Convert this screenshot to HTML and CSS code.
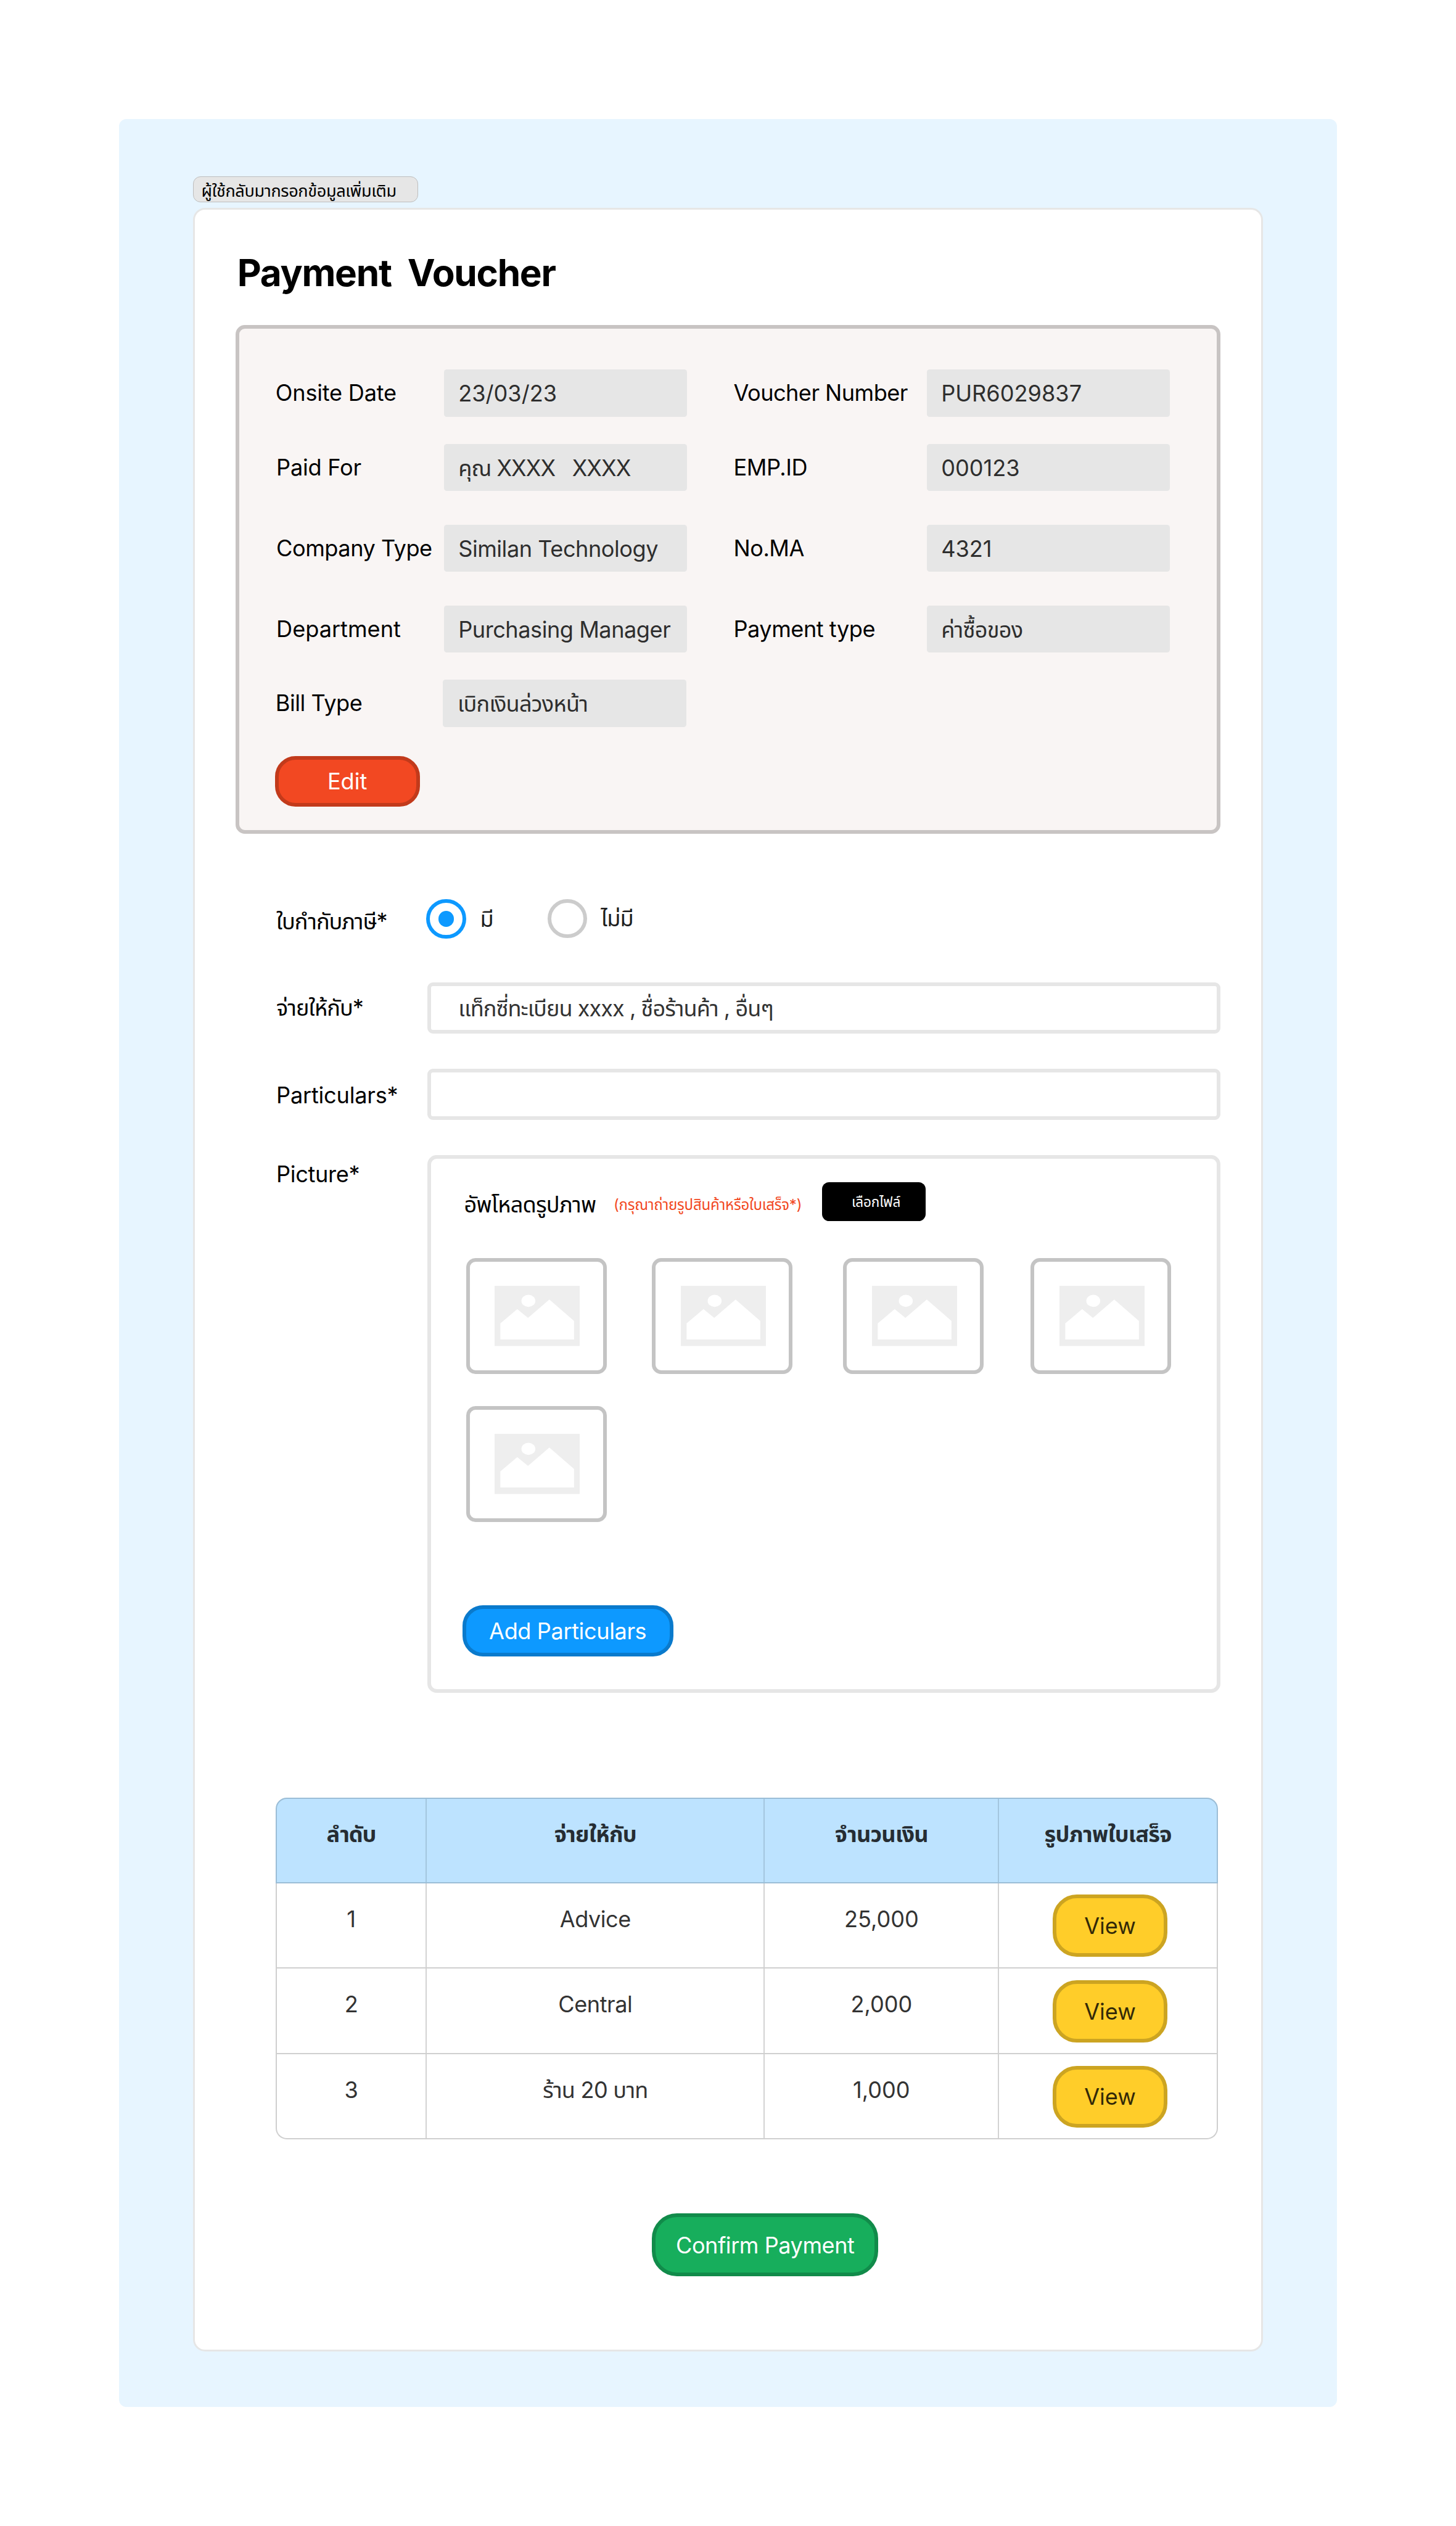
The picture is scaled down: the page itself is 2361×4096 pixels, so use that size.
FILE: index.html
```
<!DOCTYPE html>
<html lang="th">
<head>
<meta charset="utf-8">
<title>Payment Voucher</title>
<link rel="stylesheet" href="styles.css">
</head>
<body>
<svg width="0" height="0" class="defs" aria-hidden="true">
  <symbol id="image" viewBox="0 0 45.9 32.5">
    <path fill="#eeeeee" fill-rule="evenodd" d="M0 0H45.9V32.5H0ZM3.1 20.3V28.9H42.8V18.9L29.5 7.4 18 17.3 12.2 12.5ZM14.45 8.1A3.75 3.25 0 1 0 21.95 8.1A3.75 3.25 0 1 0 14.45 8.1Z"/>
  </symbol>
</svg>
<main class="canvas">
  <div class="tag">ผู้ใช้กลับมากรอกข้อมูลเพิ่มเติม</div>
  <section class="card">
    <h1 class="title">Payment&nbsp; Voucher</h1>

    <section class="panel">
      <div class="details">
        <span class="label nudge tight-xs">Onsite Date</span><span class="value tight-0">23/03/23</span>
        <span class="label second tight-m">Voucher Number</span><span class="value tight-0">PUR6029837</span>

        <span class="label tight-xs">Paid For</span><span class="value tight-xl">คุณ XXXX&nbsp;&nbsp; XXXX</span>
        <span class="label second">EMP.ID</span><span class="value tight-0">000123</span>

        <span class="label">Company Type</span><span class="value">Similan Technology</span>
        <span class="label second">No.MA</span><span class="value tight-0">4321</span>

        <span class="label tight-0">Department</span><span class="value">Purchasing Manager</span>
        <span class="label second">Payment type</span><span class="value tight-l">ค่าซื้อของ</span>

        <span class="label nudge">Bill Type</span><span class="value nudge tight-l">เบิกเงินล่วงหน้า</span>
      </div>
      <button class="btn btn-edit">Edit</button>
    </section>

    <form class="form">
      <span class="label label-tax tight-xxl">ใบกำกับภาษี*</span>
      <div class="radios">
        <span class="radio on"></span><span class="choice first">มี</span>
        <span class="radio"></span><span class="choice">ไม่มี</span>
      </div>

      <span class="label label-pay tight-xl">จ่ายให้กับ*</span>
      <div class="input tight-xl">แท็กซี่ทะเบียน xxxx , ชื่อร้านค้า , อื่นๆ</div>

      <span class="label label-part tight-xs">Particulars*</span>
      <div class="input"></div>

      <span class="label label-pic tight-s">Picture*</span>
      <div class="upload">
        <div class="upload-head">
          <span class="upload-title tight-l">อัพโหลดรูปภาพ</span>
          <span class="upload-note">(กรุณาถ่ายรูปสินค้าหรือใบเสร็จ*)</span>
          <span class="file-btn">เลือกไฟล์</span>
        </div>
        <div class="thumbs">
          <div class="thumb"><svg><use href="#image"/></svg></div>
          <div class="thumb"><svg><use href="#image"/></svg></div>
          <div class="thumb"><svg><use href="#image"/></svg></div>
          <div class="thumb"><svg><use href="#image"/></svg></div>
          <div class="thumb"><svg><use href="#image"/></svg></div>
        </div>
        <button type="button" class="btn btn-add">Add Particulars</button>
      </div>
    </form>

    <div class="table">
      <div class="row head"><span class="tight-xxl">ลำดับ</span><span class="tight-l">จ่ายให้กับ</span><span class="tight-l">จำนวนเงิน</span><span class="tight-l">รูปภาพใบเสร็จ</span></div>
      <div class="row"><span>1</span><span>Advice</span><span class="tight-0">25,000</span><span class="action"><button class="btn btn-view">View</button></span></div>
      <div class="row"><span>2</span><span>Central</span><span class="tight-0">2,000</span><span class="action"><button class="btn btn-view">View</button></span></div>
      <div class="row"><span>3</span><span class="tight-l">ร้าน 20 บาท</span><span class="tight-0">1,000</span><span class="action"><button class="btn btn-view">View</button></span></div>
    </div>

    <button class="btn btn-confirm">Confirm Payment</button>
  </section>
</main>
</body>
</html>
```
FILE: styles.css
```
* { box-sizing: border-box; }

/* 1rem = 10 layout units */
html { font-size: 30.115px; }

body {
  margin: 0;
  height: 4096px;
  overflow: hidden;
  background: #fff;
  font-family: Inter, "Noto Sans Thai", sans-serif;
  font-size: 1.2rem;
  letter-spacing: -0.013em;
  color: #000;
  white-space: nowrap;
}

.defs { position: absolute; }

/* tracking */
.tight-0 { letter-spacing: 0; }
.tight-xs { letter-spacing: -0.006em; }
.tight-s { letter-spacing: -0.009em; }
.tight-m { letter-spacing: -0.015em; }
.tight-l { letter-spacing: -0.021em; }
.tight-xl { letter-spacing: -0.027em; }
.tight-xxl { letter-spacing: -0.031em; }

.canvas {
  width: 65.6rem;
  height: 123.2rem;
  margin: 6.4rem 0 0 6.4rem;
  padding: 3.1rem 4rem 0;
  background: #e7f5ff;
  border-radius: 0.4rem;
}

.tag {
  width: 12.13rem;
  height: 1.4rem;
  padding: 0.1rem 0 0 0.41rem;
  border: 1px solid #bdbdbd;
  border-radius: 0.4rem;
  background: #e6e6e6;
  font-size: 0.9rem;
  line-height: 1.34rem;
  letter-spacing: -0.013em;
}

.card {
  width: 57.6rem;
  height: 115.4rem;
  margin-top: 0.3rem;
  padding: 2.2rem 2.2rem 0;
  border: 0.1rem solid #e6e6e6;
  border-radius: 0.65rem;
  background: #fff;
}

.title {
  margin: 0 0 1.6rem 0.08rem;
  font-size: 2rem;
  font-weight: 700;
  line-height: 2.4rem;
  letter-spacing: -0.0213em;
}

.panel {
  height: 27.4rem;
  padding: 2.2rem 0 0 1.98rem;
  border: 0.2rem solid #c8c4c3;
  border-radius: 0.5rem;
  background: #f9f5f4;
}

.details {
  display: grid;
  grid-template-columns: 9.02rem 13.1rem 12.9rem 13.1rem;
  grid-template-rows: 4rem 4.35rem 4.35rem 4rem 2.55rem;
  align-items: start;
}

.label { line-height: 2.58rem; }
.label.second { padding-left: 2.5rem; }

.value {
  height: 2.55rem;
  padding: 0.04rem 0 0 0.78rem;
  border-radius: 0.15rem;
  background: #e6e6e6;
  color: #2e2e2e;
  line-height: 2.55rem;
}

.nudge { margin: 0 0.04rem 0 -0.04rem; }

.btn {
  display: flex;
  align-items: center;
  justify-content: center;
  padding: 0.05rem 0 0;
  border: 0.2rem solid;
  font: inherit;
  letter-spacing: -0.011em;
  line-height: 2rem;
  color: #fff;
}

.btn-edit {
  width: 7.8rem;
  height: 2.74rem;
  margin: 1.55rem 0 0 -0.08rem;
  border-color: #c23a1b;
  border-radius: 1.1rem;
  background: #f24822;
  letter-spacing: 0;
}

.form {
  display: grid;
  grid-template-columns: 8.12rem 42.7rem;
  grid-template-rows: 2.6rem 2.75rem 2.75rem 28.95rem;
  row-gap: 1.9rem;
  margin: 3.5rem 0 0 2.18rem;
}

.label-tax { padding-top: 0.15rem; line-height: 2.15rem; }
.label-pay { padding-top: 0.01rem; line-height: 2.75rem; }
.label-part { padding-top: 0.06rem; line-height: 2.75rem; }
.label-pic { padding-top: 0.04rem; line-height: 2rem; }

.radios {
  display: flex;
  align-items: flex-start;
  margin-left: -0.05rem;
  color: #1e1e1e;
}

.radio {
  display: flex;
  align-items: center;
  justify-content: center;
  width: 2.1rem;
  height: 2.1rem;
  border: 0.2rem solid #ccc;
  border-radius: 50%;
}
.radio.on { width: 2.15rem; height: 2.15rem; border-color: #0d99ff; }
.radio.on::before {
  content: "";
  width: 0.85rem;
  height: 0.85rem;
  border-radius: 50%;
  background: #0d99ff;
}

.choice { padding-left: 0.75rem; line-height: 2.1rem; letter-spacing: -0.025em; }
.choice.first { width: 4.4rem; line-height: 2.17rem; }

.input {
  padding: 0.04rem 0 0 1.48rem;
  border: 0.2rem solid #e6e6e6;
  border-radius: 0.3rem;
  color: #333;
  line-height: 2.35rem;
}

.upload {
  padding: 1.25rem 0 0 1.79rem;
  border: 0.2rem solid #e6e6e6;
  border-radius: 0.5rem;
}

.upload-head {
  display: grid;
  grid-template-columns: 8.05rem 11.21rem 5.59rem;
  align-items: start;
  height: 2.1rem;
  line-height: 2.1rem;
}
.upload-title { padding-top: 0.18rem; }
.upload-note {
  padding-top: 0.19rem;
  color: #f24822;
  font-size: 0.8rem;
  letter-spacing: -0.0105em;
}
.file-btn {
  height: 2.1rem;
  padding-left: 1.61rem;
  border-radius: 0.38rem;
  background: #000;
  color: #fff;
  font-size: 0.75rem;
  letter-spacing: -0.008em;
}

.thumbs {
  display: grid;
  grid-template-columns: 10rem 10.3rem 10.1rem 7.57rem;
  grid-template-rows: 7.95rem 6.25rem;
  margin: 2rem 0 0 0.11rem;
}
.thumb {
  width: 7.57rem;
  height: 6.25rem;
  padding: 1.3rem 0 0 1.35rem;
  border: 0.2rem solid #c4c4c4;
  border-radius: 0.5rem;
}
.thumb svg { display: block; width: 4.59rem; height: 3.25rem; }

.btn-add {
  width: 11.35rem;
  height: 2.74rem;
  margin: 4.5rem 0 0 -0.09rem;
  border-color: #0a7acc;
  border-radius: 1.1rem;
  background: #0d99ff;
}

.table {
  width: 50.74rem;
  margin: 5.65rem 0 0 2.14rem;
  border-radius: 0.6rem;
  color: #333;
}
.row {
  display: grid;
  grid-template-columns: 8.01rem 18.21rem 12.61rem 11.78rem;
  height: 4.6rem;
  border: solid #cfcfcf;
  border-width: 0 2px 2px;
}
.row > span {
  padding-top: 0.93rem;
  border-left: 2px solid #d3d3d3;
  text-align: center;
  line-height: 2rem;
}
.row > span:first-child { border-left: 0; }
.row:last-child { border-radius: 0 0 0.6rem 0.6rem; }
.row.head {
  border: 2px solid #9bbdd6;
  border-radius: 0.6rem 0.6rem 0 0;
  background: #bde3ff;
  color: #262d33;
  font-weight: 700;
}
.row.head > span { padding-top: 0.88rem; border-color: #a3c6df; }
.row > span.action { padding: 0.63rem 0 0 2.88rem; }

.btn-view {
  width: 6.18rem;
  height: 3.34rem;
  border-color: #cca421;
  border-radius: 1.3rem;
  background: #ffcd29;
  color: #332908;
  letter-spacing: 0;
}

.btn-confirm {
  width: 12.2rem;
  height: 3.4rem;
  margin: 3.98rem 0 0 22.4rem;
  border-color: #118b4a;
  border-radius: 1.35rem;
  background: #17ae5c;
  letter-spacing: -0.013em;
}
```
